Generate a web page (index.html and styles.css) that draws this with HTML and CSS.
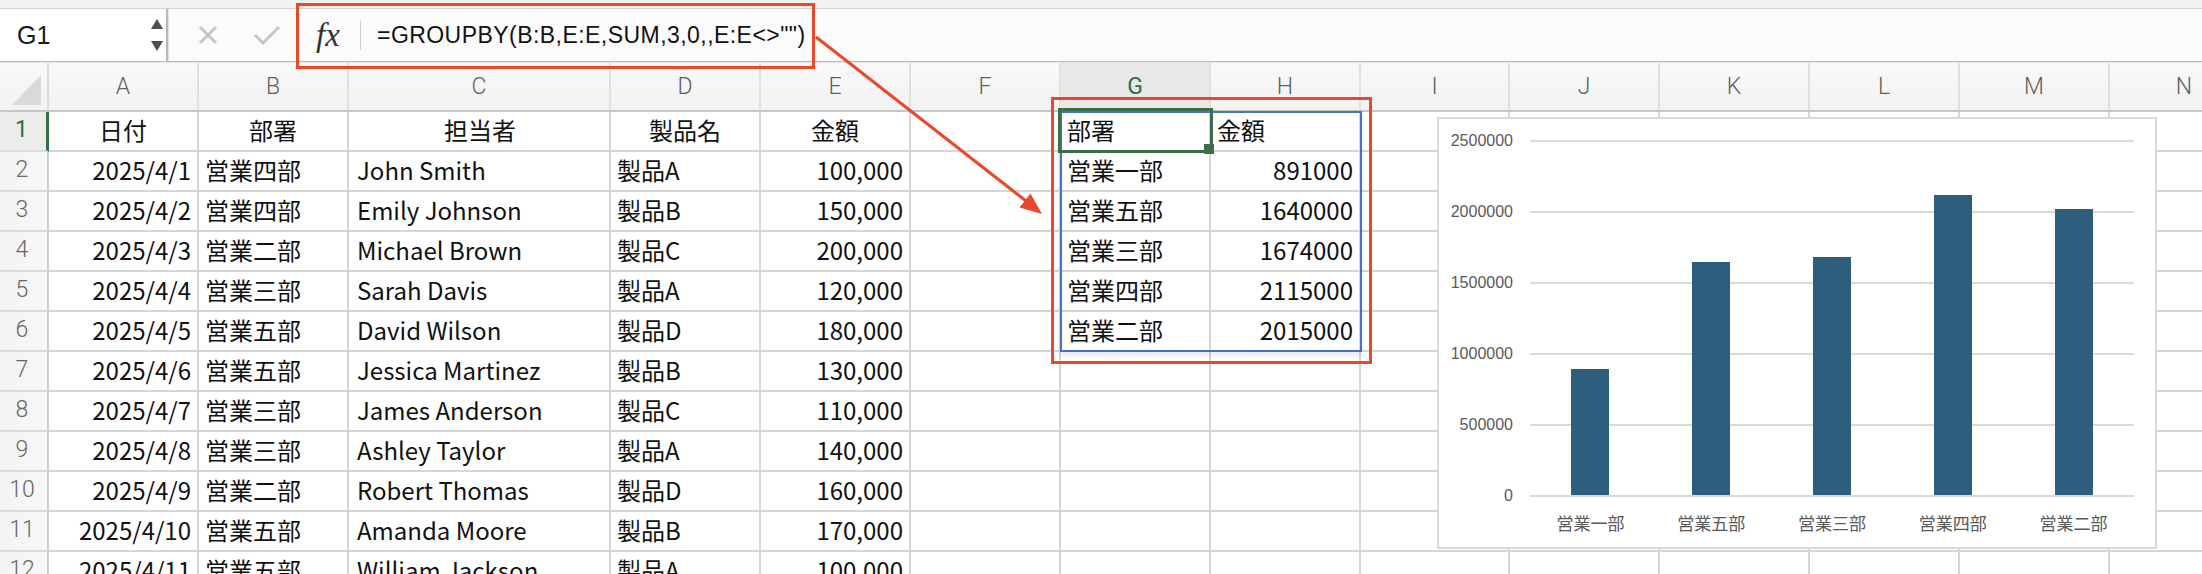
FILE: index.html
```html
<!DOCTYPE html>
<html lang="ja">
<head>
<meta charset="utf-8">
<title>GROUPBY</title>
<link rel="stylesheet" href="styles.css">
</head>
<body>
<div class="app">
  <div class="topstrip"></div>
  <div class="fbar">
    <div class="namebox">
      <span class="nb-text">G1</span>
      <span class="spinner">
        <svg width="12" height="34" viewBox="0 0 12 34"><polygon points="6,0 12,10 0,10" fill="#4f4f4f"/><polygon points="0,22 12,22 6,32" fill="#4f4f4f"/></svg>
      </span>
    </div>
    <div class="fbtns">
      <svg class="btn-x" width="20" height="20" viewBox="0 0 20 20"><path d="M2 2 L18 18 M18 2 L2 18" stroke="#c6c6c6" stroke-width="3" fill="none"/></svg>
      <svg class="btn-ok" width="28" height="20" viewBox="0 0 28 20"><path d="M2 10 L10 18 L26 2" stroke="#c6c6c6" stroke-width="3" fill="none"/></svg>
    </div>
    <div class="fx">fx</div>
    <div class="fsep"></div>
    <div class="formula">=GROUPBY(B:B,E:E,SUM,3,0,,E:E&lt;&gt;"")</div>
  </div>

  <div class="sheet">
    <div class="hrow">
      <div class="corner"></div>
      <div class="ch">A</div><div class="ch">B</div><div class="ch wide">C</div><div class="ch">D</div><div class="ch">E</div><div class="ch">F</div><div class="ch sel">G</div><div class="ch">H</div><div class="ch narrow">I</div><div class="ch">J</div><div class="ch">K</div><div class="ch">L</div><div class="ch">M</div><div class="ch">N</div>
    </div>
    <div class="row">
      <div class="rh sel">1</div>
      <div class="cell ctr">日付</div><div class="cell ctr">部署</div><div class="cell wide ctr">担当者</div><div class="cell ctr">製品名</div><div class="cell ctr">金額</div><div class="cell"></div><div class="cell">部署</div><div class="cell">金額</div><div class="cell narrow"></div><div class="cell"></div><div class="cell"></div><div class="cell"></div><div class="cell"></div><div class="cell"></div>
    </div>
    <div class="row">
      <div class="rh">2</div>
      <div class="cell num">2025/4/1</div><div class="cell">営業四部</div><div class="cell wide">John Smith</div><div class="cell">製品A</div><div class="cell num">100,000</div><div class="cell"></div><div class="cell">営業一部</div><div class="cell num">891000</div><div class="cell narrow"></div><div class="cell"></div><div class="cell"></div><div class="cell"></div><div class="cell"></div><div class="cell"></div>
    </div>
    <div class="row">
      <div class="rh">3</div>
      <div class="cell num">2025/4/2</div><div class="cell">営業四部</div><div class="cell wide">Emily Johnson</div><div class="cell">製品B</div><div class="cell num">150,000</div><div class="cell"></div><div class="cell">営業五部</div><div class="cell num">1640000</div><div class="cell narrow"></div><div class="cell"></div><div class="cell"></div><div class="cell"></div><div class="cell"></div><div class="cell"></div>
    </div>
    <div class="row">
      <div class="rh">4</div>
      <div class="cell num">2025/4/3</div><div class="cell">営業二部</div><div class="cell wide">Michael Brown</div><div class="cell">製品C</div><div class="cell num">200,000</div><div class="cell"></div><div class="cell">営業三部</div><div class="cell num">1674000</div><div class="cell narrow"></div><div class="cell"></div><div class="cell"></div><div class="cell"></div><div class="cell"></div><div class="cell"></div>
    </div>
    <div class="row">
      <div class="rh">5</div>
      <div class="cell num">2025/4/4</div><div class="cell">営業三部</div><div class="cell wide">Sarah Davis</div><div class="cell">製品A</div><div class="cell num">120,000</div><div class="cell"></div><div class="cell">営業四部</div><div class="cell num">2115000</div><div class="cell narrow"></div><div class="cell"></div><div class="cell"></div><div class="cell"></div><div class="cell"></div><div class="cell"></div>
    </div>
    <div class="row">
      <div class="rh">6</div>
      <div class="cell num">2025/4/5</div><div class="cell">営業五部</div><div class="cell wide">David Wilson</div><div class="cell">製品D</div><div class="cell num">180,000</div><div class="cell"></div><div class="cell">営業二部</div><div class="cell num">2015000</div><div class="cell narrow"></div><div class="cell"></div><div class="cell"></div><div class="cell"></div><div class="cell"></div><div class="cell"></div>
    </div>
    <div class="row">
      <div class="rh">7</div>
      <div class="cell num">2025/4/6</div><div class="cell">営業五部</div><div class="cell wide">Jessica Martinez</div><div class="cell">製品B</div><div class="cell num">130,000</div><div class="cell"></div><div class="cell"></div><div class="cell"></div><div class="cell narrow"></div><div class="cell"></div><div class="cell"></div><div class="cell"></div><div class="cell"></div><div class="cell"></div>
    </div>
    <div class="row">
      <div class="rh">8</div>
      <div class="cell num">2025/4/7</div><div class="cell">営業三部</div><div class="cell wide">James Anderson</div><div class="cell">製品C</div><div class="cell num">110,000</div><div class="cell"></div><div class="cell"></div><div class="cell"></div><div class="cell narrow"></div><div class="cell"></div><div class="cell"></div><div class="cell"></div><div class="cell"></div><div class="cell"></div>
    </div>
    <div class="row">
      <div class="rh">9</div>
      <div class="cell num">2025/4/8</div><div class="cell">営業三部</div><div class="cell wide">Ashley Taylor</div><div class="cell">製品A</div><div class="cell num">140,000</div><div class="cell"></div><div class="cell"></div><div class="cell"></div><div class="cell narrow"></div><div class="cell"></div><div class="cell"></div><div class="cell"></div><div class="cell"></div><div class="cell"></div>
    </div>
    <div class="row">
      <div class="rh">10</div>
      <div class="cell num">2025/4/9</div><div class="cell">営業二部</div><div class="cell wide">Robert Thomas</div><div class="cell">製品D</div><div class="cell num">160,000</div><div class="cell"></div><div class="cell"></div><div class="cell"></div><div class="cell narrow"></div><div class="cell"></div><div class="cell"></div><div class="cell"></div><div class="cell"></div><div class="cell"></div>
    </div>
    <div class="row">
      <div class="rh">11</div>
      <div class="cell num">2025/4/10</div><div class="cell">営業五部</div><div class="cell wide">Amanda Moore</div><div class="cell">製品B</div><div class="cell num">170,000</div><div class="cell"></div><div class="cell"></div><div class="cell"></div><div class="cell narrow"></div><div class="cell"></div><div class="cell"></div><div class="cell"></div><div class="cell"></div><div class="cell"></div>
    </div>
    <div class="row">
      <div class="rh">12</div>
      <div class="cell num">2025/4/11</div><div class="cell">営業五部</div><div class="cell wide">William Jackson</div><div class="cell">製品A</div><div class="cell num">100,000</div><div class="cell"></div><div class="cell"></div><div class="cell"></div><div class="cell narrow"></div><div class="cell"></div><div class="cell"></div><div class="cell"></div><div class="cell"></div><div class="cell"></div>
    </div>
  </div>

  <div class="chart">
    <div class="yaxis">
      <span>2500000</span><span>2000000</span><span>1500000</span><span>1000000</span><span>500000</span><span>0</span>
    </div>
    <div class="plot">
      <div class="slot"><div class="bar" style="height:126.5px"></div></div>
      <div class="slot"><div class="bar" style="height:232.9px"></div></div>
      <div class="slot"><div class="bar" style="height:237.7px"></div></div>
      <div class="slot"><div class="bar" style="height:300.3px"></div></div>
      <div class="slot"><div class="bar" style="height:286.1px"></div></div>
    </div>
    <div class="xaxis">
      <span>営業一部</span><span>営業五部</span><span>営業三部</span><span>営業四部</span><span>営業二部</span>
    </div>
  </div>

  <div class="spill-box"></div>
  <div class="sel-box"></div>
  <div class="callout callout-formula"></div>
  <div class="callout callout-result"></div>
  <svg class="arrow" width="2202" height="574" viewBox="0 0 2202 574">
    <line x1="816" y1="37" x2="1026" y2="201" stroke="#e9482b" stroke-width="3"/>
    <polygon points="1042,214 1030.5,193.5 1019.5,207.5" fill="#e9482b"/>
  </svg>
</div>
</body>
</html>
```

FILE: styles.css
```css
html, body {
  margin: 0;
  padding: 0;
  background: #ffffff;
}

.app {
  position: relative;
  width: 2202px;
  height: 574px;
  overflow: hidden;
  background: #ffffff;
  font-family: "Noto Sans CJK JP", "Noto Sans", sans-serif;
  color: #111111;
}

/* ---------- top strip & formula bar ---------- */
.topstrip {
  height: 8px;
  background: #f1f1f1;
  border-bottom: 1px solid #d4d4d4;
}

.fbar {
  display: flex;
  align-items: center;
  height: 52px;
  background: #fbfbfb;
  border-bottom: 1px solid #bdbdbd;
}

.namebox {
  display: flex;
  align-items: center;
  justify-content: space-between;
  box-sizing: border-box;
  width: 168px;
  height: 52px;
  padding: 0 3px 0 17px;
  background: #ffffff;
  border-right: 2px solid #b9b9b9;
}

.nb-text {
  font-family: "Liberation Sans", Arial, sans-serif;
  font-size: 25px;
  color: #1a1a1a;
}

.spinner {
  display: flex;
  align-items: center;
  padding-top: 2px;
}

.fbtns {
  display: flex;
  align-items: center;
  width: 128px;
  height: 52px;
  padding-left: 29px;
  box-sizing: border-box;
  border-left: 1px solid #e2e2e2;
}

.btn-x {
  margin-right: 35px;
}

.fx {
  width: 44px;
  padding-left: 20px;
  font-family: "Liberation Serif", "Times New Roman", serif;
  font-style: italic;
  font-size: 33px;
  color: #333333;
  line-height: 52px;
}

.fsep {
  width: 1px;
  height: 30px;
  background: #cfcfcf;
  margin-right: 16px;
}

.formula {
  font-family: "Liberation Sans", Arial, sans-serif;
  font-size: 23px;
  color: #111111;
  white-space: nowrap;
  letter-spacing: 0.45px;
}

/* ---------- sheet ---------- */
.sheet {
  display: flex;
  flex-direction: column;
}

.hrow {
  display: flex;
  height: 50px;
  box-sizing: border-box;
  border-top: 1px solid #e4e4e4;
  border-bottom: 2px solid #c6c6c6;
  background: linear-gradient(#f9f9f9, #f2f2f2);
}

.corner {
  position: relative;
  flex: none;
  width: 49px;
  box-sizing: border-box;
  border-right: 2px solid #dcdcdc;
}

.corner::after {
  content: "";
  position: absolute;
  right: 6px;
  bottom: 5px;
  width: 0;
  height: 0;
  border-left: 29px solid transparent;
  border-bottom: 30px solid #d9d9d9;
}

.ch {
  flex: none;
  width: 150px;
  box-sizing: border-box;
  border-right: 2px solid #e0e0e0;
  display: flex;
  align-items: center;
  justify-content: center;
  font-family: Roboto, "Liberation Sans", sans-serif;
  font-weight: 300;
  font-size: 23px;
  color: #5e5e5e;
}

.ch.sel {
  background: #e9e9e9;
  color: #2f7047;
  font-weight: 400;
}

.row {
  display: flex;
  height: 40px;
}

.rh {
  flex: none;
  width: 49px;
  box-sizing: border-box;
  border-right: 2px solid #cdcdcd;
  border-bottom: 2px solid #dadada;
  background: linear-gradient(to right, #f3f3f3, #f8f8f8);
  display: flex;
  align-items: center;
  justify-content: center;
  padding: 0 3px 4px 0;
  font-family: Roboto, "Liberation Sans", sans-serif;
  font-weight: 300;
  font-size: 23px;
  color: #666666;
}

.rh.sel {
  color: #2f7047;
  font-weight: 400;
  background: #ececec;
  border-right: 3px solid #3a7049;
}

.cell {
  flex: none;
  width: 150px;
  height: 40px;
  box-sizing: border-box;
  border-right: 2px solid #d6d6d6;
  border-bottom: 2px solid #d6d6d6;
  padding: 0 6px 4px 6px;
  display: flex;
  align-items: center;
  font-size: 24px;
  white-space: nowrap;
  overflow: hidden;
}

.cell.wide { width: 262px; padding-left: 8px; }
.cell.narrow { width: 149px; }
.ch.wide { width: 262px; }
.ch.narrow { width: 149px; }
.cell.num { justify-content: flex-end; }
.cell.ctr { justify-content: center; }

/* ---------- overlays ---------- */
.chart {
  position: absolute;
  left: 1437px;
  top: 117px;
  width: 720px;
  height: 432px;
  box-sizing: border-box;
  background: #ffffff;
  border: 2px solid #d9d9d9;
  display: grid;
  grid-template-columns: 74px 604px;
  grid-template-rows: 357px auto;
  column-gap: 17px;
  padding-top: 21px;
}

.yaxis {
  display: flex;
  flex-direction: column;
  justify-content: space-between;
  align-items: flex-end;
  height: 375px;
  margin-top: -9px;
  font-family: "Liberation Sans", Arial, sans-serif;
  font-size: 16px;
  line-height: 20px;
  color: #595959;
}

.plot {
  display: flex;
  height: 357px;
  box-sizing: border-box;
  padding-bottom: 2px;
  background: repeating-linear-gradient(to bottom, #d9d9d9 0 2px, transparent 2px 71px);
}

.slot {
  flex: 1;
  display: flex;
  align-items: flex-end;
  justify-content: center;
}

.bar {
  width: 38px;
  background: #2e5e7e;
}

.xaxis {
  grid-column: 2;
  display: flex;
  margin-top: 14px;
  font-size: 17px;
  line-height: 24px;
  color: #595959;
}

.xaxis span {
  flex: 1;
  text-align: center;
}

.spill-box {
  position: absolute;
  left: 1060px;
  top: 111px;
  width: 302px;
  height: 241px;
  box-sizing: border-box;
  border: 2px solid #4a70c4;
  box-shadow: 0 3px 6px rgba(0, 0, 0, 0.10);
}

.sel-box {
  position: absolute;
  left: 1058px;
  top: 108px;
  width: 155px;
  height: 45px;
  box-sizing: border-box;
  border: 3px solid #3a7049;
}

.sel-box::after {
  content: "";
  position: absolute;
  right: -4px;
  bottom: -4px;
  width: 10px;
  height: 10px;
  background: #3a7049;
}

.callout {
  position: absolute;
  box-sizing: border-box;
  border: 3px solid #e9482b;
}

.callout-formula {
  left: 296px;
  top: 3px;
  width: 519px;
  height: 66px;
}

.callout-result {
  left: 1051px;
  top: 97px;
  width: 321px;
  height: 267px;
}

.arrow {
  position: absolute;
  left: 0;
  top: 0;
  pointer-events: none;
}
```
